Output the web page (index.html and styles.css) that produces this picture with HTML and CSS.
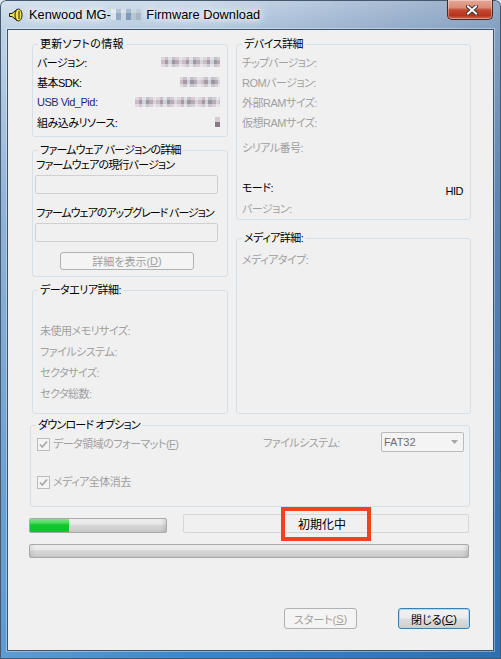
FILE: index.html
```
<!DOCTYPE html>
<html lang="ja">
<head>
<meta charset="utf-8">
<title>Kenwood MG Firmware Download</title>
<link rel="stylesheet" href="styles.css">
</head>
<body>
<div class="window">
  <div class="titlebar">
    <svg class="app-icon" width="14" height="14" viewBox="0 0 14 14">
      <path d="M0.5 5.5 L3 5.5 L8 1.5 L8 12.5 L3 8.5 L0.5 8.5 Z" fill="#f5e33b" stroke="#1a1a1a"/>
      <ellipse cx="9.5" cy="7" rx="3.5" ry="6" fill="#f5e33b" stroke="#1a1a1a"/>
      <path d="M10 3 V11" stroke="#1a1a1a"/>
    </svg>
    <div class="title">Kenwood MG-<span class="title-blur"></span> Firmware Download</div>
    <div class="close">
      <svg width="12" height="10" viewBox="0 0 12 10">
        <path d="M2 1.5 L10 8.5 M10 1.5 L2 8.5" stroke="#3a3434" stroke-width="4" stroke-linecap="square"/>
        <path d="M2 1.5 L10 8.5 M10 1.5 L2 8.5" stroke="#ffffff" stroke-width="2" stroke-linecap="square"/>
      </svg>
    </div>
  </div>

  <div class="client">
    <div class="top-grid">
      <div class="col">
        <fieldset class="group">
          <legend class="loose">更新ソフトの情報</legend>
          <div class="info-rows">
            <div class="row"><span>バージョン:</span><span class="blur blur-ver"></span></div>
            <div class="row"><span>基本SDK:</span><span class="blur blur-sdk"></span></div>
            <div class="row"><span class="navy">USB Vid_Pid:</span><span class="blur blur-usb"></span></div>
            <div class="row"><span>組み込みリソース:</span><span class="blur blur-res"></span></div>
          </div>
        </fieldset>

        <fieldset class="group gap5">
          <legend class="tight">ファームウェア バージョンの詳細</legend>
          <div class="fw">
            <div class="fw-label tight">ファームウェアの現行バージョン</div>
            <div class="textbox"></div>
            <div class="fw-label second tighter">ファームウェアのアップグレード バージョン</div>
            <div class="textbox"></div>
            <div class="btn disabled detail-btn">詳細を表示(<u>D</u>)</div>
          </div>
        </fieldset>

        <fieldset class="group gap5 grow">
          <legend>データエリア詳細:</legend>
          <div class="data-rows">
            <div class="row21 gray">未使用メモリサイズ:</div>
            <div class="row21 gray">ファイルシステム:</div>
            <div class="row21 gray">セクタサイズ:</div>
            <div class="row21 gray">セクタ総数:</div>
          </div>
        </fieldset>
      </div>

      <div class="col">
        <fieldset class="group">
          <legend>デバイス詳細</legend>
          <div class="dev-rows">
            <div class="row gray tight">チップバージョン:</div>
            <div class="row gray">ROMバージョン:</div>
            <div class="row gray">外部RAMサイズ:</div>
            <div class="row gray">仮想RAMサイズ:</div>
            <div class="row gray serial">シリアル番号:</div>
            <div class="row mode"><span>モード:</span><span class="hid">HID</span></div>
            <div class="row gray">バージョン:</div>
          </div>
        </fieldset>

        <fieldset class="group gap10 grow">
          <legend>メディア詳細:</legend>
          <div class="media-rows">
            <div class="row gray">メディアタイプ:</div>
          </div>
        </fieldset>
      </div>
    </div>

    <fieldset class="group download">
      <legend class="tight">ダウンロード オプション</legend>
      <div class="dl-row1">
        <svg class="check" width="13" height="13" viewBox="0 0 13 13">
          <rect x="0.5" y="0.5" width="12" height="12" fill="#f4f4f4" stroke="#bcbcbc"/>
          <path d="M3 6.5 L5.3 9 L10 3.5" fill="none" stroke="#a9a9a9" stroke-width="1.8"/>
        </svg>
        <span class="check-label gray">データ領域のフォーマット(<u>F</u>)</span>
        <div class="fs-group">
          <span class="fs-label gray">ファイルシステム:</span>
          <div class="combo"><span>FAT32</span>
            <svg width="7" height="4" viewBox="0 0 7 4"><path d="M0 0 H7 L3.5 4 Z" fill="#a6a6a6"/></svg>
          </div>
        </div>
      </div>
      <div class="dl-row2">
        <svg class="check" width="13" height="13" viewBox="0 0 13 13">
          <rect x="0.5" y="0.5" width="12" height="12" fill="#f4f4f4" stroke="#bcbcbc"/>
          <path d="M3 6.5 L5.3 9 L10 3.5" fill="none" stroke="#a9a9a9" stroke-width="1.8"/>
        </svg>
        <span class="check-label gray">メディア全体消去</span>
      </div>
    </fieldset>

    <div class="progress-row">
      <div class="pbar small"><div class="pfill"></div></div>
      <div class="status">初期化中<div class="annot"></div></div>
    </div>
    <div class="pbar big"></div>

    <div class="buttons">
      <div class="btn disabled start-btn">スタート(<u>S</u>)</div>
      <div class="btn default close-btn">閉じる(<u>C</u>)</div>
    </div>
  </div>
</div>
</body>
</html>
```

FILE: styles.css
```
html, body {
  margin: 0;
  padding: 0;
}
body {
  background: #dfe6ee;
  font-family: "Liberation Sans", "Noto Sans CJK JP", sans-serif;
  overflow: hidden;
}

.window {
  width: 501px;
  height: 659px;
  box-sizing: border-box;
  display: flex;
  flex-direction: column;
  padding-bottom: 8px;
  border-radius: 6px 6px 0 0;
  overflow: hidden;
  background:
    linear-gradient(to right, rgba(255,255,255,0.18), rgba(255,255,255,0) 40%, rgba(10,50,110,0.28) 100%),
    linear-gradient(to bottom, #cddbea 0px, #b4cae0 28px, #7aa4cf 200px, #4a8cc8 500px, #3b86c8 659px);
  box-shadow: inset 0 0 0 1px #44586e;
}

/* title bar */
.titlebar {
  height: 29px;
  flex: none;
  display: flex;
  align-items: flex-start;
  padding-left: 9px;
}
.app-icon {
  margin-top: 8px;
  flex: none;
}
.title {
  margin-left: 6px;
  margin-top: 7px;
  font-family: "Liberation Sans", sans-serif;
  font-size: 12.8px;
  line-height: 16px;
  color: #000;
  white-space: pre;
  text-shadow: 0 0 6px #fff, 0 0 10px #fff, 0 0 14px rgba(255,255,255,0.9);
}
.title-blur {
  display: inline-block;
  width: 30px;
  height: 11px;
  margin-right: 2px;
  vertical-align: -1px;
  background-image:
    linear-gradient(to bottom, rgba(255,255,255,0.3) 0 4px, rgba(0,0,0,0) 4px),
    repeating-linear-gradient(90deg, #dbe4ee 0 5px, #94aac2 5px 10px, #c9d5e2 10px 15px, #7f9cbc 15px 20px, #b7c6d6 20px 25px, #a6b5c5 25px 30px);
}
.close {
  margin-left: auto;
  margin-right: 8px;
  width: 46px;
  height: 20px;
  box-sizing: border-box;
  border: 1px solid #4d2723;
  border-top: none;
  border-radius: 0 0 5px 5px;
  background: linear-gradient(to bottom, #e7a796 0%, #da8c79 40%, #c54a32 52%, #b8331e 82%, #d0694e 100%);
  box-shadow: inset 0 0 0 1px rgba(255,255,255,0.35);
  display: flex;
  align-items: center;
  justify-content: center;
  padding-left: 3px;
}

/* client area */
.client {
  flex: 1;
  margin: 0 7px;
  box-sizing: border-box;
  border: 1px solid #3e526a;
  box-shadow: 0 0 0 1px rgba(255,255,255,0.35);
  background: #f0f0f0;
  padding: 6px 22px 21px 22px;
  display: flex;
  flex-direction: column;
  font-size: 11px;
  letter-spacing: -0.5px;
  font-feature-settings: "palt";
  color: #000;
}

.tight { letter-spacing: -0.8px; }
.tighter { letter-spacing: -1.05px; }
.loose { letter-spacing: 0.3px; }

.top-grid {
  display: grid;
  grid-template-columns: 196px 235px;
  column-gap: 8px;
  margin-left: 2px;
}
.col {
  display: flex;
  flex-direction: column;
}

.group {
  margin: 0;
  padding: 0;
  border: 1px solid #d5dfe5;
  border-radius: 3px;
  min-width: 0;
}
.group legend {
  margin-left: 5px;
  padding: 0 2px;
  line-height: 16px;
  color: #000;
}
.gap5 { margin-top: 5px; }
.gap10 { margin-top: 10px; }
.grow { flex: 1; }

.gray { color: #a0a0a0; }
.navy { color: #1c2a7c; }

.row {
  height: 20px;
  display: flex;
  align-items: center;
  white-space: nowrap;
}
.row21 {
  height: 21px;
  line-height: 21px;
  white-space: nowrap;
}

/* update info */
.info-rows {
  padding: 0 7px 4px 4px;
}
.blur {
  margin-left: auto;
  height: 10px;
  background-image:
    linear-gradient(to bottom, rgba(255,255,255,0.4) 0 3px, rgba(0,0,0,0) 3px 7px, rgba(255,255,255,0.45) 7px),
    repeating-linear-gradient(90deg, #c9bcc6 0 3.5px, #a79aa6 3.5px 7px, #cdd0d8 7px 10.5px, #9a98a0 10.5px 14px, #b9a9b9 14px 17.5px, #d4d4da 17.5px 21px);
}
.blur-ver { width: 59px; }
.blur-sdk { width: 40px; }
.blur-usb { width: 85px; }
.blur-res {
  width: 5px;
  background: linear-gradient(to bottom, #d2ccd2 0 5px, #8a7a84 5px);
}

/* firmware details */
.fw {
  padding: 0 9px 6px 2px;
}
.fw-label {
  line-height: 14px;
  padding-left: 1px;
  white-space: nowrap;
}
.fw-label.second {
  margin-top: 12px;
}
.textbox {
  margin-top: 3px;
  width: 183px;
  height: 19px;
  box-sizing: border-box;
  border: 1px solid #d0d0d0;
  border-radius: 2px;
  background: #f0f0f0;
}

.btn {
  box-sizing: border-box;
  height: 18px;
  display: flex;
  align-items: center;
  justify-content: center;
  border-radius: 3px;
  white-space: nowrap;
  letter-spacing: 0;
}
.btn.disabled {
  border: 1px solid #adb2b5;
  background: #f4f4f4;
  color: #a0a0a0;
}
.detail-btn {
  margin-top: 10px;
  margin-left: 25px;
  width: 134px;
}

/* data area */
.data-rows {
  padding: 23px 0 8px 7px;
}

/* device */
.dev-rows {
  padding: 0 7px 1px 5px;
}
.serial { margin-top: 5px; }
.mode {
  margin-top: 21px;
  align-items: flex-start;
}
.mode span {
  line-height: 20px;
}
.hid {
  margin-left: auto;
  padding-top: 3px;
}

.media-rows {
  padding: 3px 7px 0 5px;
}

/* download options */
.download {
  margin-top: 3px;
  margin-right: 1px;
}
.dl-row1 {
  display: flex;
  align-items: flex-start;
  padding: 0 5px 0 6px;
}
.dl-row1 .check {
  margin-top: 5px;
  flex: none;
}
.check-label {
  margin-left: 3px;
  line-height: 16px;
  white-space: nowrap;
}
.dl-row1 .check-label {
  margin-top: 3px;
}
.fs-group {
  margin-left: auto;
  display: flex;
  align-items: flex-start;
}
.fs-label {
  width: 118px;
  margin-top: 2px;
  line-height: 16px;
  white-space: nowrap;
}
.combo {
  margin-top: -1px;
  width: 83px;
  height: 20px;
  box-sizing: border-box;
  border: 1px solid #bababa;
  border-radius: 2px;
  background: #f4f4f4;
  display: flex;
  align-items: center;
  justify-content: space-between;
  padding: 0 5px 0 2px;
  color: #6e6e78;
  letter-spacing: 0;
}
.dl-row2 {
  margin-top: 22px;
  height: 16px;
  display: flex;
  align-items: center;
  padding: 0 0 16px 6px;
}

/* progress */
.progress-row {
  margin-top: 7px;
  display: flex;
  align-items: flex-end;
}
.pbar {
  box-sizing: border-box;
  border: 1px solid #a9a9a9;
  border-radius: 2px;
  background: linear-gradient(to bottom, #f2f2f2 0%, #e6e6e6 40%, #d6d6d6 50%, #cbcbcb 100%);
  box-shadow: inset -4px 0 4px -2px rgba(0,0,0,0.12), inset 4px 0 4px -2px rgba(0,0,0,0.08);
  overflow: hidden;
}
.pbar.small {
  margin-left: -1px;
  width: 138px;
  height: 15px;
}
.pfill {
  width: 39px;
  height: 100%;
  background: linear-gradient(to bottom, #7be58a 0%, #4fd862 30%, #10c82e 45%, #0bc529 100%);
}
.status {
  position: relative;
  margin-left: 16px;
  width: 286px;
  height: 19px;
  box-sizing: border-box;
  border: 1px solid #d6d6d6;
  border-radius: 2px;
  background: #f0f0f0;
  display: flex;
  align-items: center;
  justify-content: center;
  padding-right: 8px;
  font-size: 12px;
  letter-spacing: 0;
}
.annot {
  position: absolute;
  left: 97px;
  top: -8px;
  width: 90px;
  height: 34px;
  box-sizing: border-box;
  border: 4px solid #f0431c;
}
.pbar.big {
  margin-top: 11px;
  margin-left: -1px;
  width: 440px;
  height: 14px;
}

/* bottom buttons */
.buttons {
  margin-top: auto;
  display: flex;
  justify-content: flex-end;
}
.start-btn {
  width: 73px;
  height: 21px;
}
.close-btn {
  width: 72px;
  height: 21px;
  margin-left: 41px;
  margin-right: 1px;
}
.btn.default {
  border: 1px solid #3c7fb1;
  background: linear-gradient(to bottom, #f2f2f2 0%, #ebebeb 48%, #dddddd 52%, #cfcfcf 100%);
  box-shadow: inset 0 0 0 1px #a6dcf5;
  color: #000;
}
```
